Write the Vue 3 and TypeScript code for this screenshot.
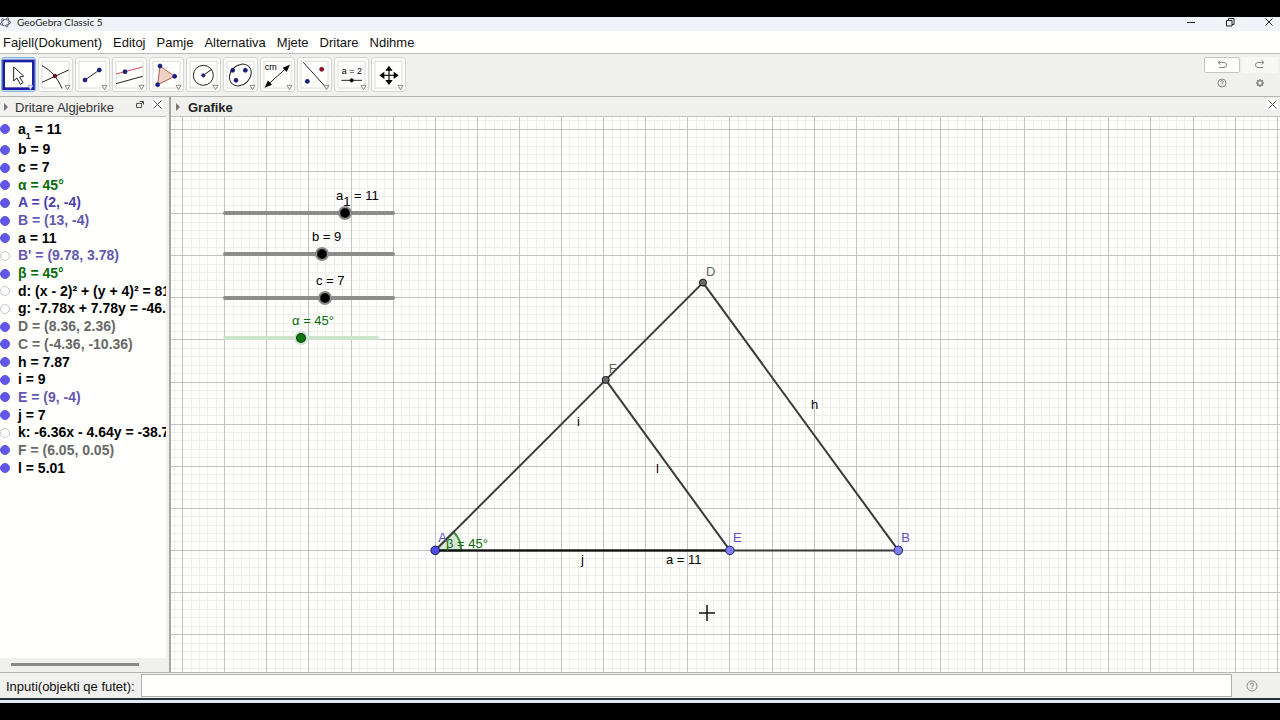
<script setup lang="ts">
import { ref } from 'vue'

interface Item { text: string; sub?: string; rest?: string; tone: string; shown: boolean }
interface Slider { id: string; name: string; sub?: string; value: number; max: number; unit: string }
interface Dot { name: string; x: number; y: number; tone: string; dx: number; dy: number }

const menus = ['Fajell(Dokument)', 'Editoj', 'Pamje', 'Alternativa', 'Mjete', 'Dritare', 'Ndihme']
const tools = ['move', 'intersect', 'segment', 'parallel', 'polygon', 'circle', 'conic', 'distance', 'reflect', 'slider', 'pan']
const activeTool = ref('move')
const command = ref('')

const items = ref<Item[]>([
  { text: 'a', sub: '1', rest: ' = 11', tone: 'black', shown: true },
  { text: 'b = 9', tone: 'black', shown: true },
  { text: 'c = 7', tone: 'black', shown: true },
  { text: 'α = 45°', tone: 'green', shown: true },
  { text: 'A = (2, -4)', tone: 'blue', shown: true },
  { text: 'B = (13, -4)', tone: 'violet', shown: true },
  { text: 'a = 11', tone: 'black', shown: true },
  { text: "B' = (9.78, 3.78)", tone: 'violet', shown: false },
  { text: 'β = 45°', tone: 'green', shown: true },
  { text: 'd: (x - 2)² + (y + 4)² = 81', tone: 'black', shown: false },
  { text: 'g: -7.78x + 7.78y = -46.6', tone: 'black', shown: false },
  { text: 'D = (8.36, 2.36)', tone: 'gray', shown: true },
  { text: 'C = (-4.36, -10.36)', tone: 'gray', shown: true },
  { text: 'h = 7.87', tone: 'black', shown: true },
  { text: 'i = 9', tone: 'black', shown: true },
  { text: 'E = (9, -4)', tone: 'violet', shown: true },
  { text: 'j = 7', tone: 'black', shown: true },
  { text: 'k: -6.36x - 4.64y = -38.7', tone: 'black', shown: false },
  { text: 'F = (6.05, 0.05)', tone: 'gray', shown: true },
  { text: 'l = 5.01', tone: 'black', shown: true },
])

const sliders = ref<Slider[]>([
  { id: 'a1', name: 'a', sub: '1', value: 11, max: 15.1, unit: '' },
  { id: 'b', name: 'b', value: 9, max: 15.5, unit: '' },
  { id: 'c', name: 'c', value: 7, max: 11.6, unit: '' },
  { id: 'alpha', name: 'α', value: 45, max: 90, unit: '°' },
])

// Canvas position of the origin and the length of one unit
const ORIGIN = { x: 180, y: 265 }
const UNIT = 42.1
const px = (x: number) => ORIGIN.x + x * UNIT
const py = (y: number) => ORIGIN.y - y * UNIT

function gridPath(step: number): string {
  let d = ''
  for (let i = -30; i < 330; i++) {
    if (step === 1 ? i % 5 !== 0 : i % 5 === 0) continue
    const x = Math.floor(px(i / 5)) + 0.5
    const y = Math.floor(py(7 - i / 5)) + 0.5
    if (x > 0) d += `M${x} 0V2400`
    if (y > 0) d += `M0 ${y}H4000`
  }
  return d
}
const majorGrid = gridPath(1)
const minorGrid = gridPath(0.2)

const dots: Dot[] = [
  { name: 'A', x: 2, y: -4, tone: 'free', dx: 3, dy: -8 },
  { name: 'B', x: 13, y: -4, tone: 'path', dx: 3, dy: -8 },
  { name: 'E', x: 9, y: -4, tone: 'path', dx: 3, dy: -8 },
  { name: 'D', x: 8.36, y: 2.36, tone: 'fixed', dx: 3, dy: -7 },
  { name: 'F', x: 6.05, y: 0.05, tone: 'fixed', dx: 3, dy: -7 },
]
const segments = [
  [2, -4, 13, -4], [2, -4, 8.36, 2.36], [8.36, 2.36, 13, -4], [6.05, 0.05, 9, -4],
]
</script>

<template>
  <div class="screen">
    <div class="window">
      <header class="titlebar">
        <svg class="logo" viewBox="0 0 12 12" aria-hidden="true">
          <ellipse cx="6" cy="6" rx="4.4" ry="3.4" transform="rotate(-20 6 6)" fill="none" stroke="#555" />
          <g fill="#fff" stroke="#3d3d70" stroke-width=".9">
            <circle cx="3" cy="3" r="1.2" /><circle cx="8.2" cy="2.2" r="1.2" /><circle cx="10.4" cy="6" r="1.2" />
            <circle cx="7.5" cy="9.6" r="1.2" /><circle cx="1.7" cy="7.5" r="1.2" />
          </g>
        </svg>
        <span class="title">GeoGebra Classic 5</span>
        <div class="controls">
          <button aria-label="Minimize"><svg viewBox="0 0 10 10"><path d="M1 5.5h8" /></svg></button>
          <button aria-label="Restore"><svg viewBox="0 0 10 10"><path d="M1.500 3.500h5.500v5.500h-5.500zM3.500 3.500V1.500h5.500v6H7" /></svg></button>
          <button aria-label="Close"><svg viewBox="0 0 10 10"><path d="M1.500 1.500l7 7M8.500 1.500l-7 7" /></svg></button>
        </div>
      </header>

      <nav class="menubar">
        <button v-for="m in menus" :key="m">{{ m }}</button>
      </nav>

      <div class="toolbar">
        <div class="tools">
          <button
            v-for="t in tools" :key="t" class="tool" :class="{ active: activeTool === t }"
            :aria-label="t" :aria-pressed="activeTool === t" @click="activeTool = t"
          >
            <svg viewBox="0 0 105 105" fill="none" stroke="#222" stroke-width="3">
              <rect v-if="activeTool !== t" x="12" y="13" width="81" height="80" stroke="#dedede" fill="#fffffd" />
              <rect v-else x="8" y="12" width="89" height="83" stroke="#1c1ca4" stroke-width="8" fill="#fffffd" />
              <path v-if="t === 'move'" d="M38 30V72L48 63L58 82L66 77L56 60L68 57Z" fill="#fff" />
              <template v-else-if="t === 'intersect'">
                <path d="M12 76L92 39M12 26Q52 46 72 94" />
                <circle cx="51" cy="57" r="5" fill="#a01020" stroke="#501" />
              </template>
              <template v-else-if="t === 'segment'">
                <path d="M30 69L73 39" />
                <g class="blue-dot"><circle cx="30" cy="69" r="6" /><circle cx="73" cy="39" r="6" /></g>
              </template>
              <template v-else-if="t === 'parallel'">
                <path d="M12 51L92 30" stroke="#d84a5a" /><path d="M12 80L92 58" />
                <circle class="blue-dot" cx="39" cy="44" r="6" />
              </template>
              <template v-else-if="t === 'polygon'">
                <path d="M33 27L77 58L26 83Z" fill="#f0d0c4" stroke="#b06050" />
                <g class="blue-dot"><circle cx="33" cy="27" r="6" /><circle cx="77" cy="58" r="6" /><circle cx="26" cy="83" r="6" /></g>
              </template>
              <template v-else-if="t === 'circle'">
                <circle cx="52" cy="55" r="30" /><path d="M52 55L77 37" />
                <circle class="blue-dot" cx="52" cy="55" r="5" />
              </template>
              <template v-else-if="t === 'conic'">
                <ellipse cx="52" cy="54" rx="36" ry="29" transform="rotate(-45 52 54)" />
                <g class="blue-dot"><circle cx="29" cy="40" r="6" /><circle cx="67" cy="40" r="6" /><circle cx="39" cy="70" r="6" /></g>
              </template>
              <template v-else-if="t === 'distance'">
                <text class="icon-text" x="14" y="39">cm</text>
                <path d="M20 86L84 29" />
                <path d="M14 92L24 70L36 83ZM90 23L68 32L80 45Z" fill="#000" stroke="none" />
              </template>
              <template v-else-if="t === 'reflect'">
                <path d="M19 16L90 95" />
                <circle class="blue-dot" cx="31" cy="73" r="6" />
                <circle cx="74" cy="37" r="6" fill="#a01020" stroke="#501" stroke-width="2" />
              </template>
              <template v-else-if="t === 'slider'">
                <text class="icon-text" x="23" y="52">a = 2</text>
                <path d="M22 70H84" /><circle cx="53" cy="70" r="5" fill="#000" />
              </template>
              <template v-else>
                <path d="M54 35V75M34 55H74" stroke-width="4" />
                <path d="M54 26L65 41H43ZM54 84L65 69H43ZM25 55L40 44V66ZM83 55L68 44V66Z" fill="#000" stroke="none" />
              </template>
              <path d="M81 85H96L88.500 98Z" fill="#fff" :stroke="activeTool === t ? '#8a9acc' : '#777'" stroke-width="2.500" />
            </svg>
          </button>
        </div>
        <div class="side">
          <button class="raised" aria-label="Undo"><svg viewBox="0 0 12 12"><path d="M2 3.500H8Q10.500 3.500 10.500 6T8 8.500H3M4.500 1.500L2 3.500L4.500 5.500" /></svg></button>
          <button class="flat" aria-label="Redo"><svg viewBox="0 0 12 12"><path d="M10 3.500H4Q1.500 3.500 1.500 6T4 8.500H9M7.500 1.500L10 3.500L7.500 5.500" /></svg></button>
          <button aria-label="Help"><svg viewBox="0 0 12 12"><circle cx="6" cy="6" r="4" /><path d="M4.700 5Q4.700 3.700 6 3.700T7.300 5Q7.200 5.800 6 6.300V7M6 7.800v.8" /></svg></button>
          <button aria-label="Settings"><svg viewBox="0 0 12 12"><circle cx="6" cy="6" r="2.500" stroke-width="1.500" /><path d="M6 2v1.500M6 8.500V10M2 6h1.500M8.500 6H10M3.200 3.200l1 1M7.800 7.800l1 1M8.800 3.200l-1 1M4.200 7.800l-1 1" stroke-width="1.500" /></svg></button>
        </div>
      </div>

      <main class="views">
        <section class="algebra">
          <div class="view-head">
            <i class="arrow"></i>
            <h2>Dritare Algjebrike</h2>
            <button class="detach" aria-label="Detach"><svg viewBox="0 0 11 11"><path d="M1.500 4.500h5v4h-5zM4.500 2.500h4v3M8.500 2.500l-2 2" /></svg></button>
            <button class="close" aria-label="Close algebra view"><svg viewBox="0 0 11 11"><path d="M1.500 1.500l8 8M9.500 1.500l-8 8" /></svg></button>
          </div>
          <div class="list-wrap">
            <ul class="list">
              <li v-for="(it, i) in items" :key="i">
                <input :id="'item' + i" v-model="it.shown" type="checkbox">
                <label :for="'item' + i" :class="it.tone">{{ it.text }}<sub v-if="it.sub">{{ it.sub }}</sub>{{ it.rest }}</label>
              </li>
            </ul>
          </div>
          <div class="hscroll"><i></i></div>
        </section>

        <section class="graphics">
          <div class="view-head">
            <i class="arrow"></i>
            <h2 class="strong">Grafike</h2>
            <button class="close" aria-label="Close graphics view"><svg viewBox="0 0 11 11"><path d="M1.500 1.500l8 8M9.500 1.500l-8 8" /></svg></button>
          </div>
          <div class="canvas">
            <svg class="plot">
              <path :d="minorGrid" stroke="#efefed" fill="none" />
              <path :d="majorGrid" stroke="#c2c2c0" fill="none" />
              <path class="angle" :d="`M${px(2)} ${py(-4)}h26a26 26 0 0 0 -7.600 -18.400z`" />
              <line v-for="(s, i) in segments" :key="i" class="seg" :x1="px(s[0])" :y1="py(s[1])" :x2="px(s[2])" :y2="py(s[3])" />
              <line class="seg dark" :x1="px(2)" :y1="py(-4)" :x2="px(9)" :y2="py(-4)" />
              <g v-for="d in dots" :key="d.name" :class="d.tone">
                <circle :cx="px(d.x)" :cy="py(d.y)" :r="d.tone === 'fixed' ? 3.500 : 4.300" />
                <text :x="px(d.x) + d.dx" :y="py(d.y) + d.dy">{{ d.name }}</text>
              </g>
              <text x="275" y="431" class="green-text">β = 45°</text>
              <text x="406" y="309">i</text>
              <text x="485" y="356">l</text>
              <text x="640" y="292">h</text>
              <text x="410" y="447">j</text>
              <text x="495" y="447">a = 11</text>
              <path d="M528 496h16M536 488v16" stroke="#111" stroke-width="1.500" />
            </svg>
            <div v-for="s in sliders" :key="s.id" class="slider" :class="s.id">
              <label :for="s.id">{{ s.name }}<sub v-if="s.sub">{{ s.sub }}</sub> = {{ Math.round(s.value) }}{{ s.unit }}</label>
              <input :id="s.id" v-model.number="s.value" type="range" min="0" :max="s.max" step="any">
            </div>
          </div>
        </section>
      </main>

      <footer class="inputbar">
        <label for="command">Inputi(objekti qe futet):</label>
        <input id="command" v-model="command" type="text" autocomplete="off">
        <button aria-label="Input help"><svg viewBox="0 0 12 12"><circle cx="6" cy="6" r="5" /><path d="M4.300 4.800Q4.300 3.200 6 3.200T7.700 4.800Q7.600 5.700 6 6.300V7.300M6 8v1" /></svg></button>
      </footer>
    </div>
  </div>
</template>

<style>
html, body { background: #000; }
</style>

<style scoped>
* { box-sizing: border-box; }
.screen {
  height: 100vh; display: flex; flex-direction: column; padding: 17px 0; overflow: hidden;
  background: #000; color: #111; font: 13px/16px "Liberation Sans", Arial, sans-serif;
}
.window { flex: 1; min-height: 0; display: flex; flex-direction: column; background: #f0f0ee; border-bottom: 3px solid #e2eaf2; }
button { font: inherit; color: inherit; background: none; border: 0; padding: 0; margin: 0; }
svg { display: block; }

.titlebar { display: flex; align-items: center; height: 14px; padding-bottom: 4px; background: #eff3f8; }
.logo { width: 11px; height: 11px; }
.title { margin-left: 6px; font: 10px/10px Lato, "Open Sans", sans-serif; color: #222; }
.controls { margin-left: auto; display: flex; gap: 29px; padding-right: 6px; }
.controls button { width: 10px; height: 10px; }
.controls svg { width: 10px; height: 10px; fill: none; stroke: #222; }

.menubar { display: flex; gap: 11px; height: 23px; padding: 2px 3px 0; background: #fffffd; border-bottom: 1px solid #bbb; }
.menubar button { height: 20px; }

.toolbar { display: flex; justify-content: space-between; height: 43px; padding: 3px 0 0 1px; border-bottom: 1px solid #b4b4b2; }
.tools { display: flex; gap: 2px; }
.tool { width: 35px; height: 35px; border: 1px solid #d6d6d4; border-radius: 3px; background: #fbfbf9; }
.tool svg { width: 35px; height: 35px; margin: -1px; }
.tool.active { border-color: #8ab4dc; background: #c4dcf0; }
.blue-dot { fill: #1a1a90; stroke: #10105c; stroke-width: 2; }
.icon-text { font: 27px "Liberation Sans", Arial, sans-serif; fill: #000; stroke: none; }
.side { display: grid; grid-template-columns: 36px 36px; grid-template-rows: 16px 16px; column-gap: 2px; row-gap: 2px; padding-right: 2px; height: 34px; }
.side button { display: grid; place-items: center; }
.side svg { width: 12px; height: 12px; fill: none; stroke: #888; }
.side .raised { background: #fffffd; border: 1px solid #c4c4c2; border-radius: 2px; }
.side .flat { background: #f7f7f5; }

.views { flex: 1; min-height: 0; display: grid; grid-template-columns: 166px 1fr; column-gap: 3px; }
.algebra, .graphics { display: flex; flex-direction: column; min-width: 0; min-height: 0; }
.graphics { border-left: 2px solid #a6a6a4; }
.view-head { display: flex; align-items: center; height: 20px; flex: none; border-bottom: 1px solid #c0c0be; }
.view-head h2 { margin: 2px 0 0 7px; font-size: 13px; font-weight: 400; line-height: 16px; white-space: nowrap; color: #333; }
.view-head h2.strong { margin-left: 8px; font-weight: 700; color: #222; }
.arrow { width: 0; height: 0; margin-left: 4px; border: solid transparent; border-width: 4px 0 4px 4px; border-left-color: #777; }
.graphics .arrow { margin-left: 5px; }
.detach { margin-left: auto; }
.detach svg, .close svg { width: 11px; height: 11px; fill: none; stroke: #555; }
.detach svg { margin-top: -4px; }
.close { margin: -4px 3px 0 6px; background: #fff; }
.graphics .close { margin: -4px 2px 0 auto; }

.list-wrap { flex: 1; min-height: 0; overflow: hidden; background: #fffffd; }
.list { display: grid; grid-template-rows: 24px repeat(19, 1fr); height: 360px; margin: 0; padding: 0; list-style: none; }
.list li { display: flex; align-items: center; min-height: 0; overflow: hidden; white-space: nowrap; font-size: 14px; font-weight: 700; }
.list input {
  appearance: none; flex: none; width: 10px; height: 10px; margin: 0 8px 0 0;
  border: 1px solid #c8c8c8; border-radius: 50%; background: #fff;
}
.list input:checked { background: #6256e8; border-color: #6256e8; }
.list label { line-height: 17px; }
.list sub { font-size: 9px; line-height: 0; vertical-align: -5px; }
.black { color: #000; }
.green { color: #0a6a0a; }
.blue { color: #4a3fae; }
.violet { color: #6258b0; }
.gray { color: #686868; }
.hscroll { flex: none; height: 14px; padding: 5px 27px 0 11px; }
.hscroll i { display: block; height: 3px; background: #888886; }

.canvas { position: relative; flex: 1; min-height: 0; overflow: hidden; background: #fffffd; }
.plot { width: 100%; height: 100%; }
.plot text { font: 13px "Liberation Sans", Arial, sans-serif; fill: #000; }
.seg { stroke: #3a3a3a; stroke-width: 2; }
.seg.dark { stroke: #111; }
.angle { fill: #d4e8d4; stroke: #3c8c3c; stroke-width: 2; }
.plot .green-text { fill: #0a6a0a; }
.free circle { fill: #4d4ded; stroke: #16164c; }
.path circle { fill: #7d7df5; stroke: #22225c; }
.fixed circle { fill: #6a6a6a; stroke: #111; }
.plot .free text, .plot .path text { fill: #5c54c8; }
.plot .fixed text { fill: #666; }

.slider { position: absolute; left: 52px; width: 172px; height: 32px; color: #000; --track: #8c8c8a; --thumb: #000; --ring: #8c8c8a; }
.slider.a1 { top: 71px; }
.slider.b { top: 112px; }
.slider.c { top: 156px; }
.slider.alpha { top: 196px; width: 156px; --track: #cce4cc; --thumb: #0a780a; --ring: #cce4cc; color: #0a6a0a; }
.slider label { display: block; height: 18px; padding-left: 89px; white-space: nowrap; }
.slider.a1 label { padding-left: 113px; }
.slider.c label { padding-left: 93px; }
.slider.alpha label { padding-left: 69px; }
.slider sub { font-size: 13px; line-height: 0; vertical-align: -6px; }
.slider input { appearance: none; display: block; width: 100%; height: 14px; margin: 0; background: none; }
.slider input::-webkit-slider-runnable-track { height: 4px; border-radius: 2px; background: var(--track); }
.slider input::-webkit-slider-thumb {
  appearance: none; width: 14px; height: 14px; margin-top: -5px; border-radius: 50%;
  border: 2px solid var(--ring); background: var(--thumb); box-shadow: inset 0 0 0 1px #222;
}

.inputbar { display: flex; align-items: center; height: 28px; flex: none; border-top: 1px solid #b4b4b2; border-bottom: 2px solid #2a3038; background: #f0f0ee; }
.inputbar label { margin: 3px 6px 0 6px; white-space: nowrap; }
.inputbar input { flex: 1; min-width: 0; height: 23px; padding: 0 4px; border: 1px solid #b0b0ae; background: #fffffd; font: inherit; }
.inputbar button { margin: 0 22px 0 14px; }
.inputbar svg { width: 12px; height: 12px; fill: none; stroke: #888; }
</style>
